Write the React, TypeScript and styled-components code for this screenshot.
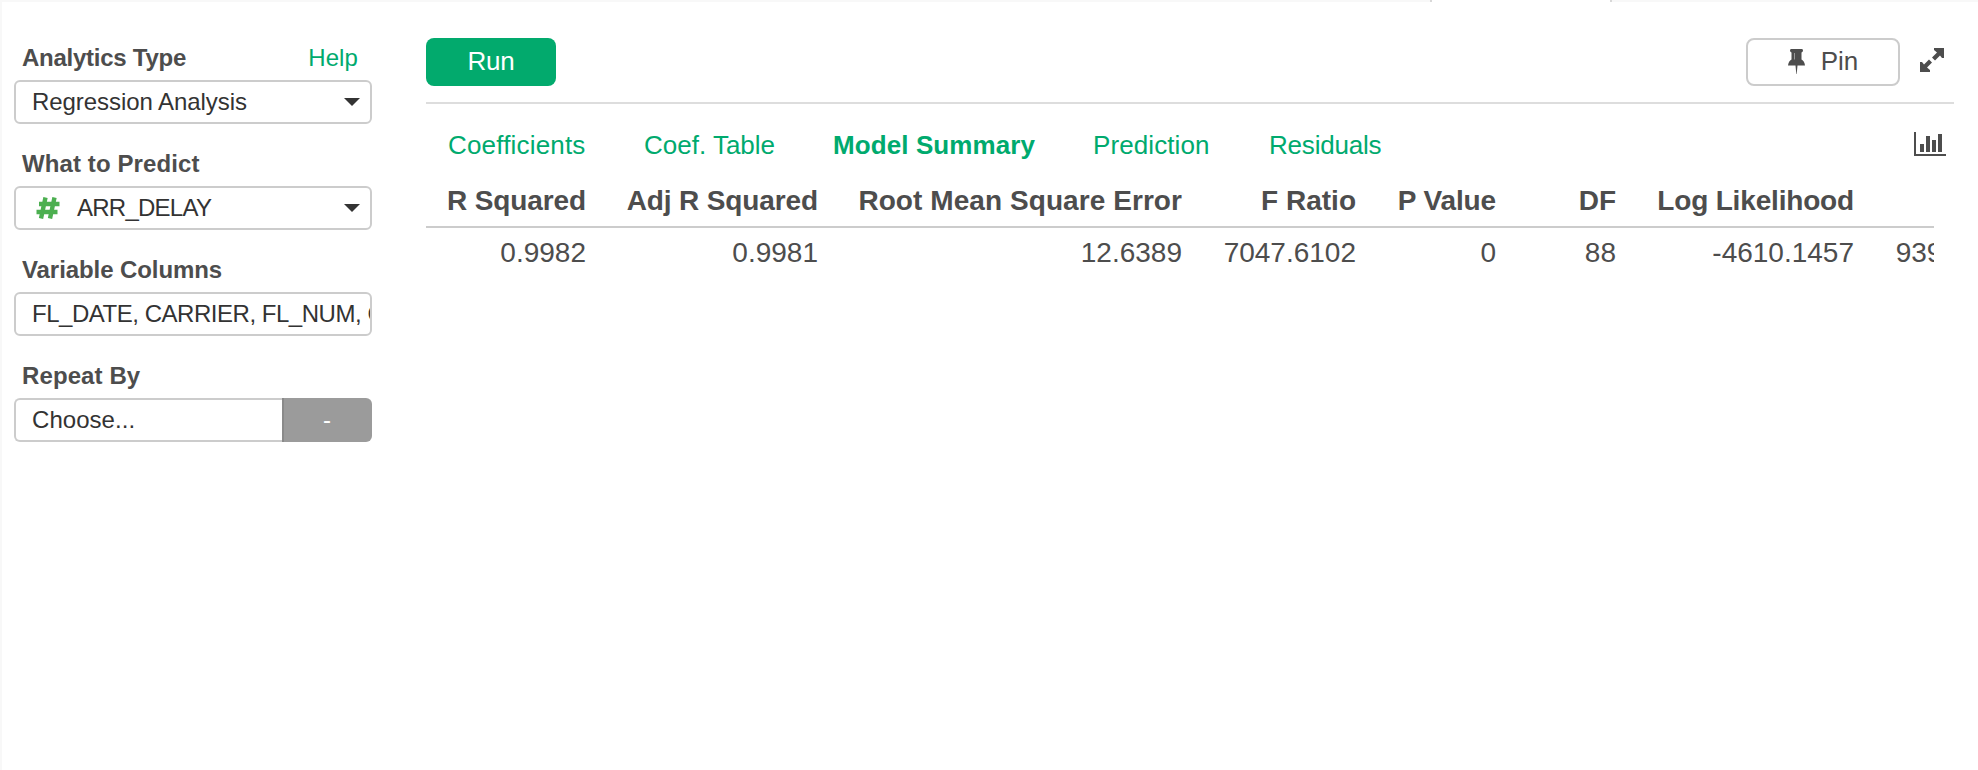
import React from "react";
import styled, { createGlobalStyle } from "styled-components";

const GlobalStyle = createGlobalStyle`
  * { box-sizing: border-box; }
  body { margin: 0; background: #fff; font-family: "Liberation Sans", Arial, Helvetica, sans-serif; color: #4d4d4d; }
`;

const Page = styled.div`
  height: 770px;
  overflow: hidden;
  display: flex;
  flex-direction: column;
  border-left: 2px solid #f8f8f8;
`;

const TabStrip = styled.div`
  display: flex;
  height: 2px;
  flex: none;
  background: #f8f8f8;
`;

const ActiveTab = styled.div`
  width: 182px;
  margin-left: 1428px;
  background: #fff;
  border: solid #d8d8d8;
  border-width: 0 2px;
`;

const Body = styled.div`
  display: flex;
  flex: 1;
`;

const Sidebar = styled.aside`
  width: 358px;
  margin: 36px 52px 0 12px;
  flex: none;
`;

const Field = styled.div`
  height: 106px;
`;

const LabelRow = styled.div`
  display: flex;
  justify-content: space-between;
  align-items: center;
  height: 42px;
  padding: 0 14px 2px 8px;
`;

const Text = styled.span<{ $spacing?: number }>`
  letter-spacing: ${(p) => p.$spacing ?? 0}px;
  white-space: pre;
`;

const Label = styled(Text)`
  font-size: 24px;
  font-weight: 700;
`;

const HelpLink = styled(Text)`
  font-size: 24px;
  color: #00aa6e;
`;

const Control = styled.div`
  display: flex;
  align-items: center;
  height: 44px;
  padding: 0 10px 0 16px;
  border: 2px solid #ccc;
  border-radius: 6px;
  font-size: 24px;
  color: #333;
  overflow: hidden;
`;

const Caret = styled.span`
  margin-left: auto;
  border: 8px solid transparent;
  border-top-color: #333;
  border-bottom: 0;
`;

const HashIcon = styled.svg`
  flex: none;
  margin: 0 17px 0 4px;
`;

const InputGroup = styled.div`
  display: flex;
`;

const GroupInput = styled(Control)`
  flex: 1;
  border-right: 0;
  border-radius: 6px 0 0 6px;
`;

const GroupButton = styled.div`
  display: flex;
  align-items: center;
  justify-content: center;
  width: 90px;
  height: 44px;
  padding-right: 2px;
  border-left: 2px solid #8a8a8a;
  border-radius: 0 6px 6px 0;
  background: #9b9b9b;
  color: #fff;
  font-size: 24px;
`;

const Main = styled.main`
  flex: 1;
  min-width: 0;
  padding: 36px 24px 0 2px;
`;

const Toolbar = styled.div`
  display: flex;
  align-items: flex-start;
  height: 66px;
  border-bottom: 2px solid #ddd;
`;

const Button = styled.div<{ $primary?: boolean }>`
  display: flex;
  align-items: center;
  justify-content: center;
  height: 48px;
  width: ${(p) => (p.$primary ? 130 : 154)}px;
  margin-left: ${(p) => (p.$primary ? 0 : "auto")};
  padding-bottom: 1px;
  border: ${(p) => (p.$primary ? "0" : "2px solid #ccc")};
  border-radius: 8px;
  background: ${(p) => (p.$primary ? "#02aa6d" : "#fff")};
  color: ${(p) => (p.$primary ? "#fff" : "#4d4d4d")};
  font-size: 26px;
`;

const PinIcon = styled.svg`
  margin-right: 16px;
`;

const ExpandIcon = styled.svg`
  margin: 10px 10px 0 20px;
`;

const Tabs = styled.nav`
  display: flex;
  align-items: center;
  height: 80px;
  padding-left: 22px;
`;

const Tab = styled(Text)<{ $active?: boolean; $width: number }>`
  width: ${(p) => p.$width}px;
  padding-top: 2px;
  font-size: 26px;
  font-weight: ${(p) => (p.$active ? 700 : 400)};
  color: #00aa6e;
`;

const ChartIcon = styled.svg`
  margin: 0 8px 0 auto;
`;

const TableClip = styled.div`
  width: 1508px;
  overflow: hidden;
`;

const Table = styled.table`
  width: 1622px;
  table-layout: fixed;
  border-collapse: collapse;
  font-size: 28px;
`;

const Th = styled.th`
  height: 43px;
  padding: 1px 20px 9px 0;
  border-bottom: 2px solid #ccc;
  text-align: right;
  line-height: 32px;
`;

const Td = styled.td`
  height: 49px;
  padding: 1px 20px 0 0;
  text-align: right;
`;

const tabs = [
  { name: "Coefficients", width: 196, spacing: 0.18 },
  { name: "Coef. Table", width: 189, spacing: 0 },
  { name: "Model Summary", width: 260, spacing: 0.1, active: true },
  { name: "Prediction", width: 176, spacing: 0.1 },
  { name: "Residuals", width: 130, spacing: -0.2 },
];

const columns = [
  { name: "R Squared", value: "0.9982", width: 180, spacing: -0.12 },
  { name: "Adj R Squared", value: "0.9981", width: 232, spacing: -0.12 },
  { name: "Root Mean Square Error", value: "12.6389", width: 364, spacing: 0.07 },
  { name: "F Ratio", value: "7047.6102", width: 174, spacing: 0 },
  { name: "P Value", value: "0", width: 140, spacing: -0.12 },
  { name: "DF", value: "88", width: 120, spacing: 0 },
  { name: "Log Likelihood", value: "-4610.1457", width: 238, spacing: -0.17 },
  { name: "", value: "9398.2914", width: 174, spacing: 0 },
];

export default function App() {
  return (
    <Page>
      <GlobalStyle />
      <TabStrip>
        <ActiveTab />
      </TabStrip>
      <Body>
        <Sidebar>
          <Field>
            <LabelRow>
              <Label $spacing={-0.26}>Analytics Type</Label>
              <HelpLink $spacing={0.1}>Help</HelpLink>
            </LabelRow>
            <Control>
              <Text $spacing={-0.06}>Regression Analysis</Text>
              <Caret />
            </Control>
          </Field>
          <Field>
            <LabelRow>
              <Label $spacing={0.1}>What to Predict</Label>
            </LabelRow>
            <Control>
              <HashIcon width="24" height="22" viewBox="0 0 24 22" stroke="#4caf50" strokeWidth="4.4">
                <path d="M9.500 0.5L5 21.5M18.500 0.5L14 21.5M3 7H23.500M0.5 15H21.5" />
              </HashIcon>
              <Text $spacing={-0.75}>ARR_DELAY</Text>
              <Caret />
            </Control>
          </Field>
          <Field>
            <LabelRow>
              <Label $spacing={-0.08}>Variable Columns</Label>
            </LabelRow>
            <Control>
              <Text $spacing={-0.47}>FL_DATE, CARRIER, FL_NUM, ORIGIN</Text>
            </Control>
          </Field>
          <Field>
            <LabelRow>
              <Label $spacing={0.1}>Repeat By</Label>
            </LabelRow>
            <InputGroup>
              <GroupInput>
                <Text $spacing={0.05}>Choose...</Text>
              </GroupInput>
              <GroupButton>-</GroupButton>
            </InputGroup>
          </Field>
        </Sidebar>
        <Main>
          <Toolbar>
            <Button $primary>
              <Text $spacing={-0.3}>Run</Text>
            </Button>
            <Button>
              <PinIcon width="17" height="25" viewBox="0 0 17 25" fill="#4d4d4d">
                <path d="M3 0H14Q15 0 15 1.500Q15 3 13.500 3.500V10.500Q16.500 12 17 16.500H9.500L8.700 25H8.300L7.500 16.500H0Q0.500 12 3.500 10.500V3.500Q2 3 2 1.500Q2 0 3 0Z" />
                <path d="M6.500 4V10.500" stroke="#999" />
              </PinIcon>
              <Text>Pin</Text>
            </Button>
            <ExpandIcon width="24" height="24" viewBox="0 0 24 24" fill="#4d4d4d">
              <path d="M14 0H24V10H22L20 7.500L15 12.500L12 9.500L17 4.500L14 2ZM10 24H0V14H2L4 16.500L9 11.500L12 14.500L7 19.500L10 22Z" />
            </ExpandIcon>
          </Toolbar>
          <Tabs>
            {tabs.map((t) => (
              <Tab key={t.name} $width={t.width} $active={t.active} $spacing={t.spacing}>
                {t.name}
              </Tab>
            ))}
            <ChartIcon width="32" height="24" viewBox="0 0 32 24" fill="#4d4d4d">
              <path d="M0 0H2V22H32V24H0ZM6 12H10V20H6ZM12 4H16V20H12ZM18 8H22V20H18ZM24 2H28V20H24Z" />
            </ChartIcon>
          </Tabs>
          <TableClip>
            <Table>
              <colgroup>
                {columns.map((c) => (
                  <col key={c.value} width={c.width} />
                ))}
              </colgroup>
              <thead>
                <tr>
                  {columns.map((c) => (
                    <Th key={c.value}>
                      <Text $spacing={c.spacing}>{c.name}</Text>
                    </Th>
                  ))}
                </tr>
              </thead>
              <tbody>
                <tr>
                  {columns.map((c) => (
                    <Td key={c.value}>
                      <Text>{c.value}</Text>
                    </Td>
                  ))}
                </tr>
              </tbody>
            </Table>
          </TableClip>
        </Main>
      </Body>
    </Page>
  );
}
